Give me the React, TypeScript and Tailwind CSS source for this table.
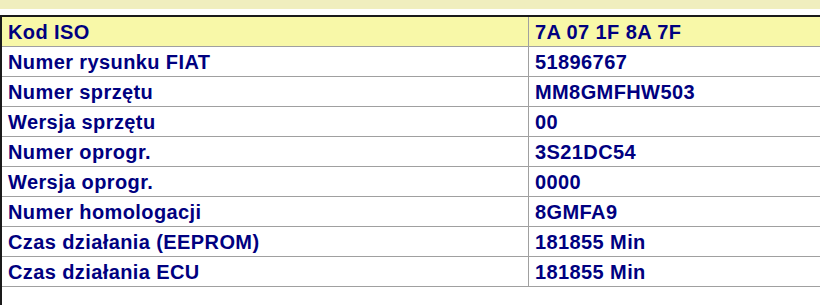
import React from 'react';

const rows: [string, string][] = [
  ['Numer rysunku FIAT', '51896767'],
  ['Numer sprzętu', 'MM8GMFHW503'],
  ['Wersja sprzętu', '00'],
  ['Numer oprogr.', '3S21DC54'],
  ['Wersja oprogr.', '0000'],
  ['Numer homologacji', '8GMFA9'],
  ['Czas działania (EEPROM)', '181855 Min'],
  ['Czas działania ECU', '181855 Min'],
];

export default function App() {
  return (
    <div className="h-[305px] w-[820px] overflow-hidden bg-white font-['Liberation_Sans',Arial,sans-serif] text-[20px] leading-none tracking-[0.4px] font-bold text-[#000080]">
      <div className="h-[9px] bg-[#f0eebe]" />
      <div className="h-[6px] bg-white" />
      <div className="h-[290px] border-t-2 border-l-2 border-t-[#1a1a1a] border-l-[#1a1a1a]">
        <div className="grid grid-cols-[527px_1fr] h-[30px] bg-[#f8f8a8] border-b border-[#a0a0a0]">
          <div className="flex items-center pl-[6px] border-r border-[#a0a0a0]">Kod ISO</div>
          <div className="flex items-center pl-[6px]">7A 07 1F 8A 7F</div>
        </div>
        {rows.map(([k, v]) => (
          <div key={k} className="grid grid-cols-[527px_1fr] h-[30px] border-b border-[#a0a0a0]">
            <div className="flex items-center pl-[6px] border-r border-[#a0a0a0]">{k}</div>
            <div className="flex items-center pl-[6px]">{v}</div>
          </div>
        ))}
      </div>
    </div>
  );
}
